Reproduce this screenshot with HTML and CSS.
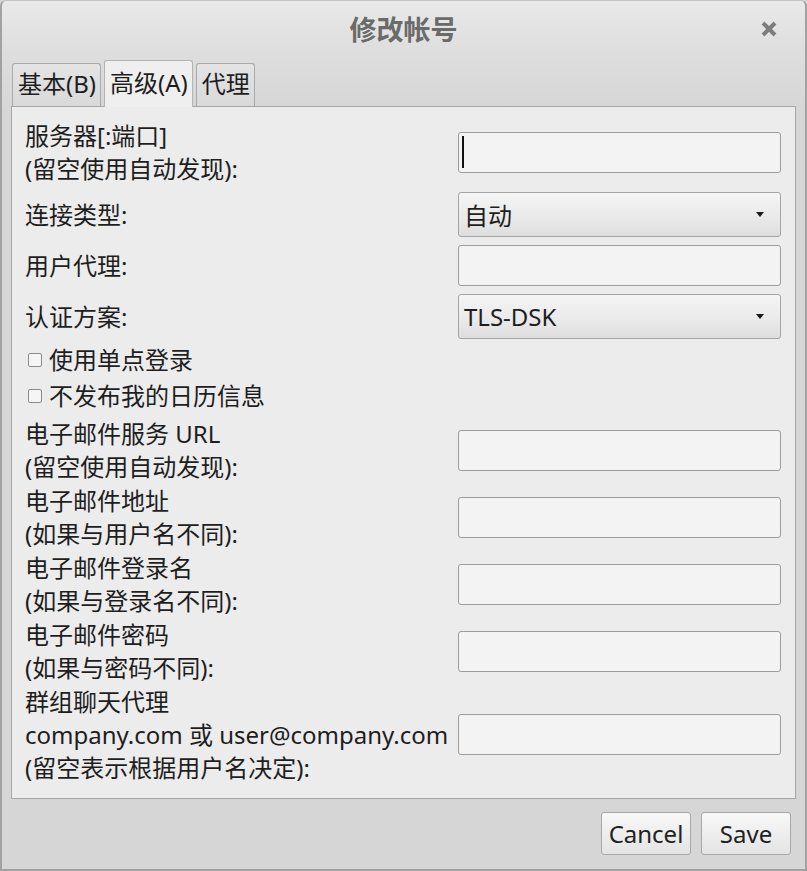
FILE: index.html
```html
<!DOCTYPE html>
<html lang="zh-CN">
<head>
<meta charset="utf-8">
<title>修改帐号</title>
<link rel="stylesheet" href="styles.css">
</head>
<body>
<div class="window">
  <div class="titlebar">
    <span class="title">修改帐号</span>
    <span class="close">
      <svg width="18" height="18" viewBox="0 0 18 18"><path d="M3 3 L15 15 M15 3 L3 15" stroke="#7d7d7d" stroke-width="4" stroke-linecap="butt" fill="none"/></svg>
    </span>
  </div>
  <div class="tabs">
    <div class="tab">基本(B)</div>
    <div class="tab active">高级(A)</div>
    <div class="tab">代理</div>
  </div>
  <div class="panel">
    <div class="row r1">
      <div class="label">服务器[:端口]<br>(留空使用自动发现):</div>
      <div class="input"><span class="caret"></span></div>
    </div>
    <div class="row r2">
      <div class="label">连接类型:</div>
      <div class="combo"><span>自动</span><span class="arrow"></span></div>
    </div>
    <div class="row r3">
      <div class="label">用户代理:</div>
      <div class="input"></div>
    </div>
    <div class="row r4">
      <div class="label">认证方案:</div>
      <div class="combo"><span>TLS-DSK</span><span class="arrow"></span></div>
    </div>
    <div class="check r5"><span class="box"></span><span>使用单点登录</span></div>
    <div class="check r6"><span class="box"></span><span>不发布我的日历信息</span></div>
    <div class="row r7">
      <div class="label">电子邮件服务 URL<br>(留空使用自动发现):</div>
      <div class="input"></div>
    </div>
    <div class="row r8">
      <div class="label">电子邮件地址<br>(如果与用户名不同):</div>
      <div class="input"></div>
    </div>
    <div class="row r8">
      <div class="label">电子邮件登录名<br>(如果与登录名不同):</div>
      <div class="input"></div>
    </div>
    <div class="row r8">
      <div class="label">电子邮件密码<br>(如果与密码不同):</div>
      <div class="input"></div>
    </div>
    <div class="row r8">
      <div class="label">群组聊天代理<br>company.com 或 user@company.com<br>(留空表示根据用户名决定):</div>
      <div class="input"></div>
    </div>
  </div>
  <div class="footer">
    <button class="btn">Cancel</button>
    <button class="btn">Save</button>
  </div>
</div>
</body>
</html>
```

FILE: styles.css
```css
html, body {
  margin: 0;
  padding: 0;
}
body {
  font-family: "Noto Sans", "Noto Sans CJK SC", sans-serif;
  color: #1e1e1e;
  background: #d6d6d6;
}
.window {
  width: 807px;
  height: 871px;
  box-sizing: border-box;
  border: 2px solid #a2a2a2;
  border-top: 1px solid #c4c4c4;
  border-radius: 6px 6px 0 0;
  background: linear-gradient(#e9e9e9 0px, #dedede 50px, #d6d6d6 110px, #d6d6d6 100%);
  display: flex;
  flex-direction: column;
  overflow: hidden;
}
.titlebar {
  height: 55px;
  display: grid;
  grid-template-columns: 1fr auto 1fr;
  align-items: center;
}
.title {
  grid-column: 2;
  font-family: "Noto Sans CJK SC", sans-serif;
  font-weight: bold;
  font-size: 27px;
  color: #6a6a6a;
}
.close {
  grid-column: 3;
  justify-self: end;
  margin-right: 27px;
  display: flex;
  margin-top: 1px;
}
.tabs {
  height: 50px;
  display: flex;
  align-items: flex-end;
  gap: 3px;
  padding-left: 10px;
  position: relative;
  z-index: 2;
}
.tab {
  height: 43px;
  box-sizing: border-box;
  padding: 0 4px 0 5px;
  border: 1px solid #a9a9a9;
  border-bottom: none;
  border-radius: 3px 3px 0 0;
  background: linear-gradient(#e4e4e4, #d9d9d9);
  font-size: 24px;
  line-height: 40px;
  color: #1e1e1e;
}
.tab.active {
  height: 47px;
  line-height: 44px;
  margin-bottom: -1px;
  background: #efefef;
  border-color: #b3b3b3;
}
.panel {
  margin: 0 9px;
  height: 693px;
  box-sizing: border-box;
  border: 1px solid #a6a6a6;
  background: #ececec;
  padding: 12px 13px 0 13px;
  display: flex;
  flex-direction: column;
}
.row {
  display: flex;
  align-items: center;
}
.label {
  width: 433px;
  flex: none;
  font-size: 24px;
  line-height: 33px;
  white-space: nowrap;
}
.input {
  width: 323px;
  height: 41px;
  box-sizing: border-box;
  border: 1px solid #9c9c9c;
  border-radius: 3px;
  background: #f3f3f3;
  display: flex;
  align-items: center;
}
.caret {
  width: 2px;
  height: 32px;
  background: #111;
  margin-left: 3px;
}
.combo {
  width: 323px;
  height: 45px;
  box-sizing: border-box;
  border: 1px solid #a4a4a4;
  border-radius: 3px;
  background: linear-gradient(#f5f5f5, #e9e9e9 60%, #dedede);
  display: flex;
  align-items: center;
  justify-content: space-between;
  padding: 0 16px 0 5px;
  font-size: 24px;
  color: #1e1e1e;
}
.arrow {
  width: 0;
  height: 0;
  border-left: 4px solid transparent;
  border-right: 4px solid transparent;
  border-top: 5px solid #1a1a1a;
}
.check {
  display: flex;
  align-items: center;
  height: 33px;
  font-size: 24px;
  line-height: 33px;
}
.box {
  width: 14px;
  height: 14px;
  box-sizing: border-box;
  border: 1px solid #8c8c8c;
  border-radius: 2px;
  background: #f5f5f5;
  margin: 0 7px 0 3px;
}
.r2 { margin-top: 7px; }
.r3 { margin-top: 8px; }
.r4 { margin-top: 8px; }
.r5 { margin-top: 4px; }
.r6 { margin-top: 3px; }
.r7 { margin-top: 5px; }
.r8 { margin-top: 1px; }
.footer {
  flex: 1;
  display: flex;
  justify-content: flex-end;
  align-items: flex-start;
  gap: 10px;
  padding: 13px 14px 0 0;
}
.btn {
  width: 90px;
  height: 43px;
  box-sizing: border-box;
  border: 1px solid #a8a8a8;
  border-radius: 3px;
  background: linear-gradient(#f8f8f8, #e4e4e4);
  font-family: "Noto Sans", "Noto Sans CJK SC", sans-serif;
  font-size: 24px;
  color: #222;
  padding: 0;
}
```
